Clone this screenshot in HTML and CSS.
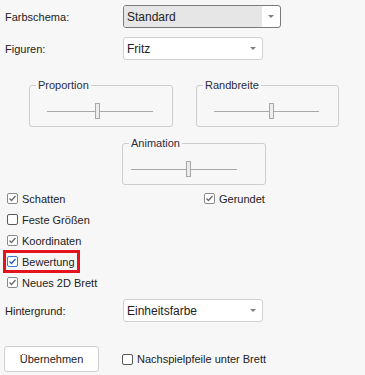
FILE: index.html
```html
<!DOCTYPE html>
<html>
<head>
    <title>Einstellungen</title>
    <link rel="stylesheet" href="styles.css">
</head>
<body>
    <div class="panel">
        <div class="row row-first">
            <span class="row-label">Farbschema:</span>
            <div class="combo combo-focus combo-wide">
                <span class="combo-value">Standard</span>
                <span class="combo-arrow"></span>
            </div>
        </div>
        <div class="row row-second">
            <span class="row-label">Figuren:</span>
            <div class="combo">
                <span class="combo-value">Fritz</span>
                <span class="combo-arrow"></span>
            </div>
        </div>

        <div class="groups">
            <fieldset class="group">
                <legend>Proportion</legend>
                <div class="slider"><span class="thumb" style="left: 45%"></span></div>
            </fieldset>
            <fieldset class="group group-narrow">
                <legend>Randbreite</legend>
                <div class="slider"><span class="thumb" style="left: 52%"></span></div>
            </fieldset>
        </div>
        <div class="groups groups-single">
            <fieldset class="group">
                <legend>Animation</legend>
                <div class="slider slider-left"><span class="thumb" style="left: 52%"></span></div>
            </fieldset>
        </div>

        <div class="checks">
            <div class="check">
                <svg class="cb cb-on" viewBox="0 0 11 11"><rect x="0.5" y="0.5" width="10" height="10" rx="1.5"/><path d="M2.5 5.5 L4.5 7.5 L8.5 3"/></svg>
                <span>Schatten</span>
            </div>
            <div class="check">
                <svg class="cb cb-on" viewBox="0 0 11 11"><rect x="0.5" y="0.5" width="10" height="10" rx="1.5"/><path d="M2.5 5.5 L4.5 7.5 L8.5 3"/></svg>
                <span>Gerundet</span>
            </div>
            <div class="check">
                <svg class="cb cb-off" viewBox="0 0 11 11"><rect x="0.5" y="0.5" width="10" height="10" rx="1.5"/></svg>
                <span>Feste Größen</span>
            </div>
            <div></div>
            <div class="check">
                <svg class="cb cb-on" viewBox="0 0 11 11"><rect x="0.5" y="0.5" width="10" height="10" rx="1.5"/><path d="M2.5 5.5 L4.5 7.5 L8.5 3"/></svg>
                <span>Koordinaten</span>
            </div>
            <div></div>
            <div class="check check-marked">
                <svg class="cb cb-hot" viewBox="0 0 11 11"><rect x="0.5" y="0.5" width="10" height="10" rx="1.5"/><path d="M2.5 5.5 L4.5 7.5 L8.5 3"/></svg>
                <span>Bewertung</span>
            </div>
            <div></div>
            <div class="check">
                <svg class="cb cb-on" viewBox="0 0 11 11"><rect x="0.5" y="0.5" width="10" height="10" rx="1.5"/><path d="M2.5 5.5 L4.5 7.5 L8.5 3"/></svg>
                <span>Neues 2D Brett</span>
            </div>
        </div>

        <div class="row row-bg">
            <span class="row-label">Hintergrund:</span>
            <div class="combo">
                <span class="combo-value">Einheitsfarbe</span>
                <span class="combo-arrow"></span>
            </div>
        </div>

        <div class="footer">
            <button class="btn">Übernehmen</button>
            <div class="check">
                <svg class="cb cb-off" viewBox="0 0 11 11"><rect x="0.5" y="0.5" width="10" height="10" rx="1.5"/></svg>
                <span>Nachspielpfeile unter Brett</span>
            </div>
        </div>
    </div>
</body>
</html>
```

FILE: styles.css
```css
body {
    margin: 0;
    padding: 0;
    background-color: #f7f7f7;
    font-family: "Liberation Sans", Arial, sans-serif;
    font-size: 11px;
    color: #222;
}
.panel {
    padding: 5px 0 0 4px;
}
.row {
    display: flex;
    align-items: center;
    height: 23px;
}
.row-second {
    margin-top: 9px;
}
.row-label {
    width: 118px;
    padding-left: 1px;
}
.combo {
    display: flex;
    width: 140px;
    height: 23px;
    box-sizing: border-box;
    border: 1px solid #d2d2d2;
    border-radius: 3px;
    background-color: #fff;
    overflow: hidden;
}
.combo-wide {
    width: 158px;
}
.combo-focus {
    border-color: #7a7a7a;
}
.combo-focus .combo-value {
    background-color: #e6e6e6;
}
.combo-value {
    flex-grow: 1;
    display: flex;
    align-items: center;
    padding-left: 3px;
    font-size: 12px;
}
.combo-arrow {
    width: 18px;
    display: flex;
    align-items: center;
    justify-content: center;
}
.combo-arrow::after {
    content: "";
    border-left: 3px solid transparent;
    border-right: 3px solid transparent;
    border-top: 3px solid #808080;
}
.groups {
    display: flex;
    gap: 23px;
    margin-top: 19px;
    padding-left: 25px;
}
.groups-single {
    margin-top: 10px;
    padding-left: 118px;
}
.group {
    margin: 0;
    padding: 0;
    width: 144px;
    box-sizing: border-box;
    border: 1px solid #cdcdcd;
    border-radius: 3px;
}
.group-narrow {
    width: 143px;
}
.group legend {
    margin-left: 6px;
    padding: 0 2px;
    line-height: 13px;
    color: #2c2c3c;
}
.slider {
    position: relative;
    height: 16px;
    margin: 11px 19px 7px 17px;
    background: linear-gradient(#a8a8a8, #a8a8a8) left 8px / 100% 1px no-repeat;
}
.slider-left {
    margin-left: 8px;
    margin-right: 28px;
}
.thumb {
    position: absolute;
    top: 0;
    width: 3px;
    height: 14px;
    border: 1px solid #a8a8a8;
    background-color: #ececec;
}
.checks {
    display: grid;
    grid-template-columns: 197px auto;
    grid-auto-rows: 21px;
    margin-top: 3px;
}
.check {
    display: flex;
    align-items: center;
    gap: 4px;
    padding-left: 3px;
    justify-self: start;
}
.check-marked {
    width: 72px;
    outline: 3px solid #e3141c;
    outline-offset: -2px;
}
.cb {
    width: 11px;
    height: 11px;
    fill: #fff;
    stroke-width: 1;
}
.cb path {
    fill: none;
    stroke-width: 1.3;
}
.cb-on rect {
    stroke: #8a8a8a;
}
.cb-on path {
    stroke: #6a6a6a;
}
.cb-off rect {
    stroke: #5a5a5a;
}
.cb-hot rect {
    stroke: #3a7ccf;
}
.cb-hot path {
    stroke: #2560b8;
}
.row-bg {
    margin-top: 6px;
}
.footer {
    display: flex;
    align-items: center;
    gap: 20px;
    margin-top: 24px;
}
.btn {
    width: 95px;
    height: 26px;
    border: 1px solid #cfcfcf;
    border-radius: 3px;
    background-color: #fff;
    font-family: inherit;
    font-size: 11px;
    color: #222;
}
```
